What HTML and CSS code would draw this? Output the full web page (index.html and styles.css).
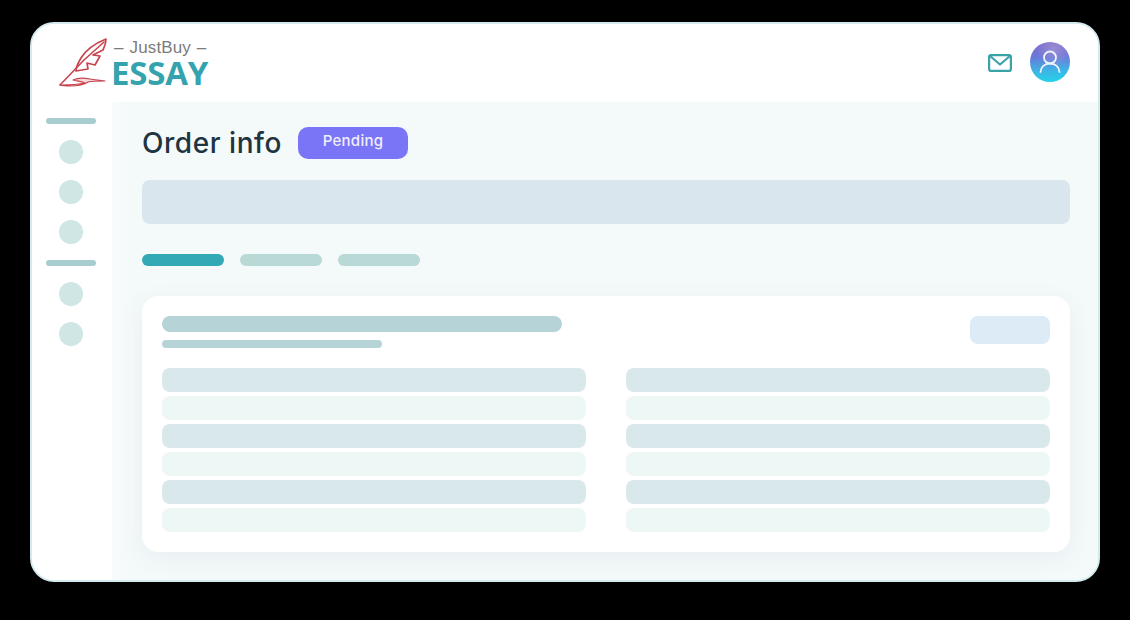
FILE: index.html
```html
<!DOCTYPE html>
<html lang="en">
<head>
<meta charset="utf-8">
<title>Order info</title>
<link rel="stylesheet" href="styles.css">
</head>
<body>
<div class="frame">
  <header class="topbar">
    <div class="logo">
      <svg class="quill" width="50" height="50" viewBox="0 0 50 50" fill="none" stroke="#c8444f" stroke-linecap="round" stroke-linejoin="round">
        <path d="M47 1 C37 5 27 12 22 20 C19 25 17 29 17 33 L29 31 L28 25 L36 27 L41 18 L34 17 L44 12 C46 8 47 5 47 1 Z" stroke-width="1.7"/>
        <path d="M45 4 L25 22 L1 47" stroke-width="1.6"/>
        <path d="M1 47 C9 47 18 47 26 45 C22 43 17 43 14 42 C20 39 26 40 31 41 C36 42 41 42 46 43 C39 43 34 43 29 44 C25 47 18 48 11 48 C7 48 4 48 1 47 Z" fill="#d4636c" fill-opacity="0.25" stroke-width="1.2"/>
      </svg>
      <div class="wordmark">
        <div class="just">– JustBuy –</div>
        <div class="essay">ESSAY</div>
      </div>
    </div>
    <div class="actions">
      <svg class="mail" width="24" height="18" viewBox="0 0 24 18" fill="none" stroke="#3ba3a8" stroke-width="2.2" stroke-linejoin="round" stroke-linecap="round">
        <rect x="1.1" y="1.1" width="21.8" height="15.8" rx="2"/>
        <path d="M2 2 L12 10.5 L22 2"/>
      </svg>
      <div class="avatar">
        <svg width="24" height="24" viewBox="0 0 24 24" fill="none" stroke="#eef6fb" stroke-width="1.8" stroke-linecap="round">
          <circle cx="12" cy="7.5" r="6"/>
          <path d="M2.5 22 C3 17 6.5 13.5 12 13.5 C17.5 13.5 21 17 21.5 22"/>
        </svg>
      </div>
    </div>
  </header>
  <div class="body">
    <aside class="sidebar">
      <div class="bar"></div>
      <div class="dot"></div>
      <div class="dot"></div>
      <div class="dot"></div>
      <div class="bar"></div>
      <div class="dot"></div>
      <div class="dot"></div>
    </aside>
    <main class="content">
      <div class="heading">
        <h1>Order info</h1>
        <span class="badge">Pending</span>
      </div>
      <div class="banner"></div>
      <div class="tabs">
        <div class="tab active"></div>
        <div class="tab"></div>
        <div class="tab"></div>
      </div>
      <section class="card">
        <div class="card-head">
          <div class="titles">
            <div class="line-a"></div>
            <div class="line-b"></div>
          </div>
          <div class="btn"></div>
        </div>
        <div class="cols">
          <div class="col">
            <div class="row dark"></div><div class="row light"></div>
            <div class="row dark"></div><div class="row light"></div>
            <div class="row dark"></div><div class="row light"></div>
          </div>
          <div class="col">
            <div class="row dark"></div><div class="row light"></div>
            <div class="row dark"></div><div class="row light"></div>
            <div class="row dark"></div><div class="row light"></div>
          </div>
        </div>
      </section>
    </main>
  </div>
</div>
</body>
</html>
```
FILE: styles.css
```css
* { box-sizing: border-box; }
html, body { margin: 0; padding: 0; height: 100%; }
body { background: #000; overflow: hidden; font-family: "Inter", "Liberation Sans", sans-serif; padding: 22px 30px; }
.frame {
  width: 1070px;
  height: 560px;
  background: #fff;
  border: 2px solid #d3ebee;
  border-radius: 24px;
  overflow: hidden;
  display: flex;
  flex-direction: column;
}
.topbar {
  height: 78px;
  flex: none;
  display: flex;
  justify-content: space-between;
  align-items: center;
  padding: 0 28px 2px 27px;
  background: #fff;
}
.logo { display: flex; align-items: center; gap: 4px; }
.quill { flex: none; margin-top: 2px; }
.wordmark { display: flex; flex-direction: column; gap: 2px; margin-top: 2px; }
.just { font-family: "Liberation Sans", sans-serif; font-size: 17px; line-height: 18px; color: #7c7c7c; word-spacing: 1px; letter-spacing: 0.15px; margin-left: 1px; white-space: nowrap; }
.essay { font-family: "Open Sans", sans-serif; font-weight: 700; font-size: 33px; line-height: 28px; color: #35a3ae; letter-spacing: -0.2px; margin-left: -2px; }
.actions { display: flex; align-items: center; gap: 18px; }
.mail { display: block; margin-top: 1px; }
.avatar {
  width: 40px;
  height: 40px;
  border-radius: 50%;
  background: radial-gradient(circle at 60% 18%, rgba(170, 150, 215, 0.7) 0%, rgba(170, 150, 215, 0) 45%), linear-gradient(178deg, #7c6ec8 0%, #6b76d8 35%, #3fb3e4 70%, #1fd6ea 100%);
  display: flex;
  align-items: center;
  justify-content: center;
}
.body { flex: 1; display: flex; min-height: 0; }
.sidebar {
  width: 80px;
  flex: none;
  display: flex;
  flex-direction: column;
  align-items: center;
  padding: 16px 2px 0 0;
  background: #fff;
}
.bar { width: 50px; height: 6px; border-radius: 3px; background: #a7cdd0; flex: none; }
.dot { width: 24px; height: 24px; border-radius: 50%; background: #cfe6e5; margin-bottom: 16px; flex: none; }
.bar + .dot { margin-top: 16px; }
.content {
  flex: 1;
  background: linear-gradient(90deg, #f8fbfc 0, #f4f9fa 16px), #f4f9fa;
  padding: 25px 28px 0 30px;
}
.heading { display: flex; align-items: center; gap: 16px; height: 32px; }
h1 { margin: 0; font-family: "Inter", sans-serif; font-weight: 500; font-size: 28px; line-height: 32px; color: #1f3440; letter-spacing: 0.55px; }
.badge {
  width: 110px;
  height: 32px;
  border-radius: 10px;
  background: #7a75f6;
  color: #f0effe;
  font-family: "Inter", sans-serif;
  font-size: 15px;
  font-weight: 500;
  letter-spacing: 0.25px;
  line-height: 28px;
  padding-bottom: 4px;
  display: flex;
  align-items: center;
  justify-content: center;
}
.banner { height: 44px; margin-top: 21px; border-radius: 8px; background: #d9e6ed; }
.tabs { display: flex; gap: 16px; margin-top: 30px; }
.tab { width: 82px; height: 12px; border-radius: 6px; background: #b9d9d6; }
.tab.active { background: #33a9b6; }
.card {
  margin-top: 30px;
  height: 256px;
  border-radius: 16px;
  background: #fff;
  padding: 20px;
  box-shadow: 0 6px 24px rgba(90, 110, 120, 0.07);
}
.card-head { display: flex; justify-content: space-between; align-items: flex-start; height: 52px; }
.titles { display: flex; flex-direction: column; gap: 8px; }
.line-a { width: 400px; height: 16px; border-radius: 8px; background: #b6d3d8; }
.line-b { width: 220px; height: 8px; border-radius: 4px; background: #b6d3d8; }
.btn { width: 80px; height: 28px; border-radius: 8px; background: #dcebf5; }
.cols { display: grid; grid-template-columns: 424px 424px; column-gap: 40px; }
.col { display: flex; flex-direction: column; gap: 4px; }
.row { height: 24px; border-radius: 8px; }
.row.dark { background: #d9e8ea; }
.row.light { background: #edf8f6; }
```
